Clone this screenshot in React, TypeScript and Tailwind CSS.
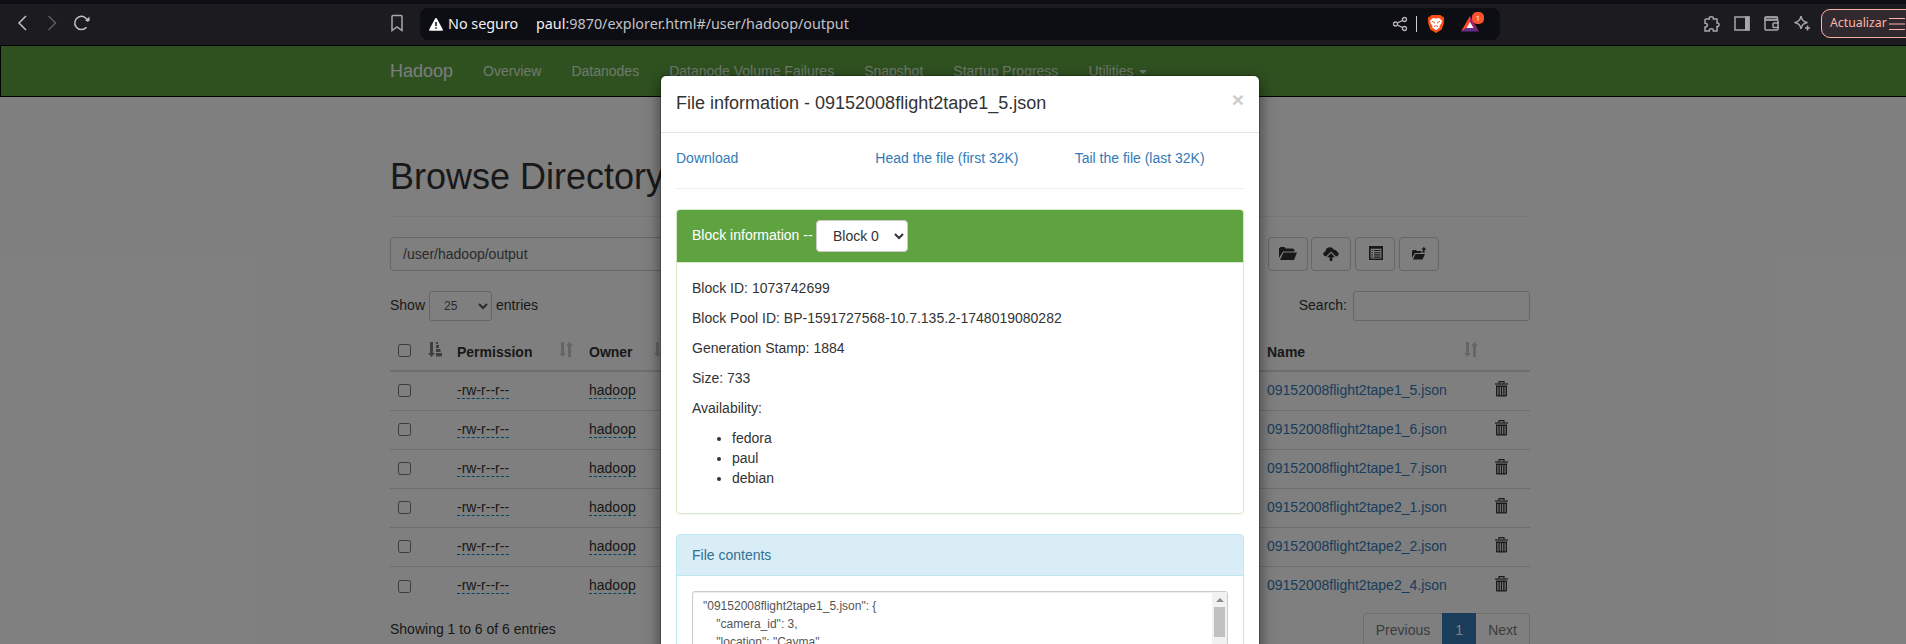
import React from 'react';

const files = [
  '09152008flight2tape1_5.json',
  '09152008flight2tape1_6.json',
  '09152008flight2tape1_7.json',
  '09152008flight2tape2_1.json',
  '09152008flight2tape2_2.json',
  '09152008flight2tape2_4.json',
];

function SortIcon({ className }: { className: string }) {
  return (
    <svg width="14" height="15" viewBox="0 0 14 15" className={className} fill="currentColor">
      <path d="M2 0h3v11h2L3.500 15 0 11h2z" />
      <path d="M9 15h3V4h2L10.500 0 7 4h2z" />
    </svg>
  );
}

function SortAscIcon() {
  return (
    <svg width="14" height="15" viewBox="0 0 14 15" className="text-[#7f7f7f]" fill="currentColor">
      <path d="M2 0h3v11h2L3.500 15 0 11h2z" />
      <path d="M8 0h2v2H8zM8 3h3v3H8zM8 7h4.500v3H8zM8 11h6v3.500H8z" />
    </svg>
  );
}

function TrashIcon() {
  return (
    <svg width="13" height="16" viewBox="0 0 13 16" className="text-[#333]" fill="none" stroke="currentColor">
      <path d="M4 2.500V.7h5v1.800" strokeWidth="1.200" />
      <path d="M0 3h13" strokeWidth="1.200" />
      <path d="M1 4.600h11v1.400H1zM1.500 14.200h10v1.300h-10z" fill="currentColor" stroke="none" />
      <path d="M1.700 5v10M4.100 5v10M6.500 5v10M8.900 5v10M11.300 5v10" strokeWidth="1.350" />
    </svg>
  );
}

function Toolbar() {
  return (
    <div className="h-[45px] w-full bg-[#1c1b20] border-t-4 border-[#0d0f14] flex items-start text-[#a8a6ab] font-['Noto_Sans',sans-serif]">
      <svg width="420" height="41" viewBox="0 4 420 41" className="shrink-0" fill="none" stroke="currentColor" strokeWidth="1.500">
        <path d="M26 16l-7 7 7 7" stroke="#c0bec3" />
        <path d="M48.500 16l7 7-7 7" stroke="#5c5b60" />
        <path d="M86.500 27.200a6.600 6.600 0 1 1 1.400-5.500" stroke="#c0bec3" />
        <path d="M85 21h4.500v-4.500z" fill="#c0bec3" stroke="none" />
        <path d="M392 16.500q0-1 1-1h8q1 0 1 1v14l-5-3.500-5 3.500z" />
      </svg>
      <div className="mt-1 h-8 w-[1080px] shrink-0 rounded-lg bg-[#0d0e13] flex items-center pl-[9px] pr-4 text-[14.35px] leading-5">
        <svg width="14" height="13" viewBox="0 0 14 13" className="text-white">
          <path d="M6 .8q1-1.400 2 0l5.700 10.400q.6 1.500-1 1.600H1.300q-1.600-.1-1-1.600z" fill="currentColor" />
          <path d="M7 4v4M7 9.300v1.500" stroke="#0d0e13" strokeWidth="1.500" />
        </svg>
        <span className="ml-[5px] w-[88px] text-[#f2f0f4]">No seguro</span>
        <span className="text-[#c3c2c7] grow"><span className="text-[#f2f0f4]">paul</span>:9870/explorer.html#/user/hadoop/output</span>
        <svg width="92" height="32" viewBox="1392 8 92 32">
          <g fill="none" stroke="#b5b3b8" strokeWidth="1.300">
            <circle cx="1395.500" cy="24" r="2" />
            <circle cx="1404.500" cy="19.500" r="2" />
            <circle cx="1404.500" cy="28.500" r="2" />
            <path d="M1397.300 23l5.400-2.700M1397.300 25l5.400 2.700" />
            <path d="M1416.500 16v16" stroke="#d0ced3" strokeWidth="1" />
          </g>
          <path d="M1431.500 15h9l1.500 1.800 1.300-.2 1 2.700-.6 1.700.3 1.500-2.300 7-5.700 3.500-5.700-3.500-2.300-7 .3-1.500-.6-1.700 1-2.700 1.300.2z" fill="#fb4f14" />
          <path d="M1433 18l3 .6 3-.6 3 2.700-.8 3-1.700 2 .2 1.800-3.700 2.700-3.700-2.700.2-1.800-1.700-2-.8-3z" fill="#fff" />
          <path d="M1432 21.500l2.500.8-.2 1.200M1440 21.500l-2.500.8.2 1.200M1434 26.500l2-.8 2 .8" stroke="#fb4f14" strokeWidth=".9" fill="none" />
          <path d="M1470 16l-9 15.500 9-5.500z" fill="#ff4724" />
          <path d="M1470 16l9 15.500-9-5.500z" fill="#9e1f63" />
          <path d="M1461 31.500h18l-9-6z" fill="#662d91" />
          <path d="M1470 22l-3.500 6h7z" fill="#fff" />
          <rect x="1472" y="12" width="12" height="12" rx="5" fill="#ff5330" />
          <text x="1478" y="20.500" textAnchor="middle" fontSize="7.500" fill="#fff">1</text>
        </svg>
      </div>
      <svg width="321" height="41" viewBox="1500 4 321 41" className="shrink-0" fill="none" stroke="currentColor" strokeWidth="1.500">
        <path d="M1706 19h3.300q-.7-2.300 2-2.300t2 2.300h3.700v4q2-.2 2 1.800t-2 1.800v4.400h-3.700q.3-2.300-2-2.300t-2 2.300H1705v-4q2.300.2 2.300-1.800t-2.300-2V20q0-1 1-1z" />
        <path d="M1735 17h14v13h-14z" />
        <path d="M1745 16.500h4.500v14h-4.500z" fill="currentColor" stroke="none" />
        <path d="M1765 17h12.500v3H1765z" fill="currentColor" fillOpacity=".4" strokeWidth="1" />
        <path d="M1777.500 20v-2q0-1-1-1h-10.500q-1 0-1 1v11q0 1 1 1h11q1 0 1-1v-8q0-1-1-1H1765M1779 23h-5q-1 0-1 1v2.500q0 1 1 1h5" />
        <path d="M1801 16q.8 5.700 6.500 6.500-5.700.8-6.500 6.500-.8-5.700-6.500-6.500 5.700-.8 6.500-6.500z" />
        <path d="M1807.500 25.500v5M1805 28h5" />
      </svg>
      <div className="mt-[5px] h-[29px] w-[99px] shrink-0 rounded-[9px] border border-[#ffb3a8] bg-[#30292d] flex items-center pl-2 text-[12.3px] text-[#ffb3a8]">
        <span className="w-[59px]">Actualizar</span>
        <svg width="16" height="14" viewBox="0 0 16 14" stroke="currentColor" strokeWidth="1.200"><path d="M0 1.500h16M0 7h16M0 12.500h16" /></svg>
      </div>
    </div>
  );
}

function NavBar() {
  return (
    <nav className="h-[52px] border border-black bg-[#5fa341] pl-[374px] flex text-[14px] leading-5 text-[#dff0d8]">
      <a className="px-[15px] py-[15px] text-[18px] text-[#f8f8f8]">Hadoop</a>
      {['Overview', 'Datanodes', 'Datanode Volume Failures', 'Snapshot', 'Startup Progress'].map((t) => (
        <a key={t} className="px-[15px] py-[15px]">{t}</a>
      ))}
      <a className="px-[15px] py-[15px] flex items-center">
        Utilities
        <span className="ml-[5px] mt-0.5 border-x-4 border-t-4 border-x-transparent border-t-current" />
      </a>
    </nav>
  );
}

function IconButton({ children, className }: { children: React.ReactNode; className: string }) {
  return (
    <button className={`h-[34px] w-10 rounded border border-[#ccc] flex items-center justify-center text-[#333] ${className}`}>
      {children}
    </button>
  );
}

function Explorer() {
  return (
    <main className="ml-[390px] w-[1140px] pt-[60px] text-[14px] leading-5 text-[#333]">
      <h1 className="text-[36px] leading-[39.600px] pb-[19px] border-b border-[#eee]">Browse Directory</h1>
      <div className="mt-5 flex">
        <input className="h-[34px] w-[834px] rounded border border-[#ccc] px-3 text-[#555]" defaultValue="/user/hadoop/output" />
        <IconButton className="ml-11">
          <svg width="18" height="13" viewBox="0 0 18 13" fill="currentColor"><path d="M0 11V1.500L1.500 0h4L7 1.500h7L15.500 3v1.500H4z" /><path d="M4.500 5.500H18L15 13H1z" /></svg>
        </IconButton>
        <IconButton className="ml-[3px]">
          <svg width="16" height="14" viewBox="0 0 16 14" fill="currentColor"><path d="M3 9.500Q.300 9.300.300 6.900.300 4.700 2.500 4.200 3 .5 6.800.3q3 0 4 2.400 2.800-.4 3.200 2 1.700.6 1.700 2.300 0 2.300-2.700 2.500L8 4.500z" /><path d="M8 6l4 4.200H9.300V14H6.700v-3.800H4z" /></svg>
        </IconButton>
        <IconButton className="ml-1">
          <svg width="14" height="14" viewBox="0 0 14 14" fill="none" stroke="currentColor" className="ml-px -mt-0.5"><path d="M.8.800h12.400v12.400H.8z" strokeWidth="1.600" /><path d="M.7 1.500h12.600" strokeWidth="2.500" /><path d="M2.500 4.500h1.300M5 4.500h6.500M2.500 6.700h1.300M5 6.700h6.500M2.500 8.900h1.300M5 8.900h6.500M2.500 11.100h1.300M5 11.100h6.500" strokeWidth="1.100" /></svg>
        </IconButton>
        <IconButton className="ml-1">
          <svg width="15" height="13" viewBox="0 0 15 13" fill="currentColor"><path d="M0 11V4l1-1h3l1 1h4v2H3z" /><path d="M3.500 7H13l-2.500 5.500H1z" /><path d="M11.800 0L14.500 2.500h-1.800v3H9.500V4.200h1.500V2.500H9.200z" /></svg>
        </IconButton>
      </div>
      <div className="mt-5 h-[30px] flex items-center justify-between">
        <div className="flex items-center gap-1">
          <span className="-mt-0.5">Show</span>
          <select className="h-[30px] w-[63px] rounded-[3px] border border-[#ccc] bg-white px-[10px] text-[12px] text-[#555]"><option>25</option></select>
          <span className="-mt-0.5">entries</span>
        </div>
        <div className="flex items-center">
          <span className="-mt-0.5">Search:</span>
          <input className="ml-[6px] h-[30px] w-[177px] rounded-[3px] border border-[#ccc]" />
        </div>
      </div>
      <div className="mt-[11px] h-10 grid grid-cols-[67px_132px_678px_220px_1fr] items-center border-b-2 border-[#ddd] font-bold">
        <div className="flex items-center pl-2 -mt-px"><input type="checkbox" className="size-[13px]" /><span className="ml-[17px] -mt-0.5"><SortAscIcon /></span></div>
        <div className="flex items-center pt-0.5"><span className="w-[102px]">Permission</span><SortIcon className="-mt-1 text-[#ccc]" /></div>
        <div className="flex items-center pt-0.5"><span className="w-[65px]">Owner</span><SortIcon className="-mt-1 text-[#ccc]" /></div>
        <div className="flex items-center pt-0.5"><span className="w-[197px]">Name</span><SortIcon className="-mt-1 text-[#ccc]" /></div>
      </div>
      {files.map((f) => (
        <div key={f} className="h-[39px] grid grid-cols-[67px_132px_678px_228px_1fr] items-center border-b border-[#ddd] last-of-type:border-0">
          <div className="pl-2 flex"><input type="checkbox" className="size-[13px]" /></div>
          <div className="pb-0.5"><span className="border-b border-dashed border-[#0088cc]">-rw-r--r--</span></div>
          <div className="pb-0.5"><span className="border-b border-dashed border-[#0088cc]">hadoop</span></div>
          <a className="pb-0.5 text-[#337ab7]">{f}</a>
          <div className="-mt-1"><TrashIcon /></div>
        </div>
      ))}
      <footer className="mt-[7px] flex justify-between">
        <div className="pt-[6px]">Showing 1 to 6 of 6 entries</div>
        <div className="flex h-[34px] rounded border border-[#ddd] text-[#777] leading-8">
          <span className="px-3">Previous</span>
          <span className="-my-px h-[34px] w-[34px] bg-[#337ab7] text-center leading-[34px] text-white">1</span>
          <span className="px-3">Next</span>
        </div>
      </footer>
    </main>
  );
}

function FileModal() {
  return (
    <div className="absolute left-[660px] top-[75px] w-[600px] rounded-md border border-black/20 bg-white bg-clip-padding shadow-[0_5px_15px_rgba(0,0,0,0.5)] text-[14px] leading-5 text-[#333]">
      <div className="flex justify-between border-b border-[#e5e5e5] p-[15px]">
        <h4 className="text-[18px] leading-[25.700px]">File information - 09152008flight2tape1_5.json</h4>
        <span className="-mt-0.5 text-[21px] font-bold leading-[21px] text-[#ccc]">×</span>
      </div>
      <div className="p-[15px]">
        <div className="-mx-[15px] grid grid-cols-3 text-[#337ab7]">
          <a className="px-[15px]">Download</a>
          <a className="px-[15px]">Head the file (first 32K)</a>
          <a className="px-[15px]">Tail the file (last 32K)</a>
        </div>
        <hr className="my-5 border-t border-[#eee]" />
        <section className="rounded border border-[#d6e9c6] shadow-[0_1px_1px_rgba(0,0,0,0.05)]">
          <div className="flex items-center rounded-t-[3px] border-b border-[#d6e9c6] bg-[#5fa341] px-[15px] py-[10px] text-white">
            <span className="w-[124px] -mt-0.5">Block information --</span>
            <select className="h-8 w-[92px] rounded border border-[#ccc] bg-white px-3 text-[#333]"><option>Block 0</option></select>
          </div>
          <div className="p-[15px]">
            <p className="mb-[10px]">Block ID: 1073742699</p>
            <p className="mb-[10px]">Block Pool ID: BP-1591727568-10.7.135.2-1748019080282</p>
            <p className="mb-[10px]">Generation Stamp: 1884</p>
            <p className="mb-[10px]">Size: 733</p>
            <p className="mb-[10px]">Availability:</p>
            <ul className="mb-[10px] list-disc pl-10"><li>fedora</li><li>paul</li><li>debian</li></ul>
          </div>
        </section>
        <section className="mt-5 rounded border border-[#bce8f1]">
          <div className="rounded-t-[3px] border-b border-[#bce8f1] bg-[#d9edf7] px-[15px] py-[10px] text-[#31708f]">File contents</div>
          <div className="p-[15px]">
            <div className="flex h-[150px] justify-between rounded-[3px] border border-[#ccc] shadow-[inset_0_1px_1px_rgba(0,0,0,0.075)]">
              <pre className="px-[10px] py-[5px] font-['Liberation_Sans',sans-serif] text-[12px] leading-[18px] text-[#555]">{'"09152008flight2tape1_5.json": {\n    "camera_id": 3,\n    "location": "Cayma",'}</pre>
              <div className="flex w-[15px] flex-col items-center bg-[#f1f1f1]">
                <span className="mt-[6px] border-x-4 border-b-4 border-x-transparent border-b-[#8b8b8b]" />
                <span className="mt-[5px] h-[30px] w-[11px] bg-[#c1c1c1]" />
              </div>
            </div>
          </div>
        </section>
      </div>
    </div>
  );
}

export default function App() {
  return (
    <div className="h-[644px] w-full overflow-hidden">
      <div className="w-[1920px]">
        <Toolbar />
        <div className="relative h-[599px] overflow-hidden bg-white font-['Liberation_Sans',sans-serif]">
          <NavBar />
          <Explorer />
          <div className="absolute inset-0 bg-black/50" />
          <div className="absolute inset-x-0 -top-[45px]"><FileModal /></div>
        </div>
      </div>
    </div>
  );
}
